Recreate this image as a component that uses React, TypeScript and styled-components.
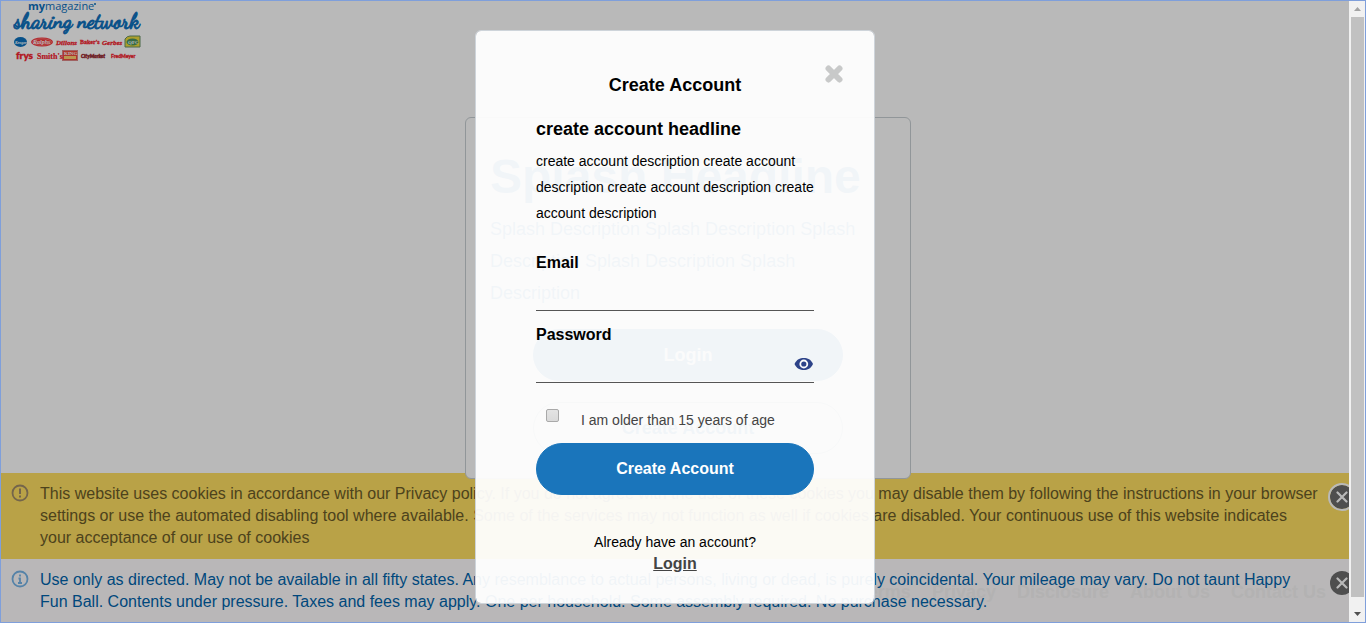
import React from "react";
import styled, { createGlobalStyle, css } from "styled-components";

const GlobalStyle = createGlobalStyle`
  *, *::before, *::after { box-sizing: border-box; }
  body { margin: 0; font-family: "Liberation Sans", Arial, sans-serif; color: #000; }
  h1, h2, h3, p { margin: 0; }
`;

const Frame = styled.div`
  display: flex;
  min-height: 100vh;
  border: 1px solid #7f9fdb;
`;

const Page = styled.div`
  position: relative;
  flex: 1;
  min-width: 0;
  display: flex;
  flex-direction: column;
  overflow: hidden;
  background: #fff;
`;

const Header = styled.header`
  height: 116px;
  padding-left: 12px;
`;

const Main = styled.main`
  padding-left: 26px;
`;

const SplashCard = styled.section`
  position: relative;
  z-index: 1;
  width: 446px;
  margin: 0 auto -6px;
  padding: 30px 24px 24px;
  display: flex;
  flex-direction: column;
  border: 1px solid #c8cfd3;
  border-radius: 6px;
  background: #fff;
  color: #1a75bb;
`;

const SplashTitle = styled.h1`
  font-size: 48px;
  line-height: 58px;
  white-space: nowrap;
`;

const SplashText = styled.p`
  margin-top: 7px;
  font-size: 18px;
  line-height: 32px;
`;

const PillButton = styled.button<{ $outline?: boolean; $size: number }>`
  height: 52px;
  padding: 0;
  border: 1px solid #1a75bb;
  border-radius: 26px;
  background: #1a75bb;
  color: #fff;
  font: bold ${(p) => p.$size}px "Liberation Sans", Arial, sans-serif;
  cursor: pointer;
  ${(p) =>
    p.$outline &&
    css`
      border-color: #a4b8c6;
      background: transparent;
      color: #1a75bb;
    `}
`;

const SplashActions = styled.div`
  display: flex;
  flex-direction: column;
  gap: 21px;
  margin: 20px 43px 0;
`;

const Notices = styled.div`
  position: relative;
  margin-top: auto;
`;

const Notice = styled.div<{ $warning?: boolean }>`
  position: relative;
  display: flex;
  align-items: flex-start;
  padding: 10px 29px ${(p) => (p.$warning ? 10 : 9)}px 10px;
  background: ${(p) => (p.$warning ? "#ffdf62" : "#fffdfe")};
  color: ${(p) => (p.$warning ? "#6b5c28" : "#0064ac")};
`;

const NoticeIcon = styled.svg`
  flex: none;
  width: 18px;
  height: 18px;
  margin: 1px 11px 0 0;
`;

const NoticeText = styled.p`
  position: relative;
  z-index: 1;
  font-size: 16px;
  line-height: 22px;
`;

const NoticeClose = styled.button<{ $ring?: boolean }>`
  position: absolute;
  z-index: 1;
  top: 10px;
  right: -7px;
  width: 28px;
  height: 28px;
  padding: 0;
  display: grid;
  place-items: center;
  border: 2px solid ${(p) => (p.$ring ? "#fff" : "transparent")};
  border-radius: 50%;
  background: #6c6c6c;
  background-clip: padding-box;
  color: #fff;
  cursor: pointer;
`;

const FooterNav = styled.nav`
  position: absolute;
  right: 23px;
  bottom: 20px;
  display: flex;
  gap: 21px;
`;

const FooterLink = styled.a`
  color: #f7f5f6;
  font-size: 18px;
  line-height: 20px;
  font-weight: bold;
  text-decoration: none;
`;

const Backdrop = styled.div`
  position: absolute;
  inset: 0;
  z-index: 2;
  display: flex;
  align-items: flex-start;
  justify-content: center;
  padding-top: 29px;
  background: rgba(0, 0, 0, 0.275);
`;

const Dialog = styled.form`
  position: relative;
  width: 400px;
  padding: 42px 60px 28px;
  display: flex;
  flex-direction: column;
  border: 1px solid #ced4da;
  border-radius: 6px;
  background: rgba(255, 255, 255, 0.94);
  background-clip: padding-box;
`;

const DialogClose = styled.button`
  position: absolute;
  top: 34px;
  right: 31px;
  width: 18px;
  height: 18px;
  padding: 0;
  border: 0;
  background: none;
  color: #c8c9c9;
  cursor: pointer;
  svg { display: block; }
`;

const DialogTitle = styled.h2`
  font-size: 18px;
  line-height: 24px;
  text-align: center;
`;

const DialogHeadline = styled.h3`
  margin-top: 20px;
  font-size: 18px;
  line-height: 24px;
`;

const DialogText = styled.p`
  margin-top: 7px;
  font-size: 14px;
  line-height: 26px;
`;

const Fields = styled.div`
  display: flex;
  flex-direction: column;
  gap: 12px;
  margin-top: 25px;
`;

const Field = styled.div`
  display: flex;
  flex-direction: column;
`;

const Label = styled.label`
  font-size: 16px;
  font-weight: bold;
  line-height: 24px;
`;

const InputRow = styled.div`
  display: flex;
  align-items: center;
  height: 36px;
  padding-bottom: 2px;
  border-bottom: 1px solid #555;
`;

const Input = styled.input`
  flex: 1;
  min-width: 0;
  height: 32px;
  padding: 0;
  border: 0;
  outline: 0;
  background: transparent;
  font: 16px "Liberation Sans", Arial, sans-serif;
`;

const EyeButton = styled.button`
  padding: 0;
  border: 0;
  background: none;
  line-height: 0;
  cursor: pointer;
`;

const AgeRow = styled.label`
  display: flex;
  align-items: flex-start;
  gap: 22px;
  margin: 26px 0 12px;
  padding-left: 10px;
  color: #444;
  font-size: 14px;
  line-height: 22px;
`;

const Checkbox = styled.input`
  appearance: none;
  width: 13px;
  height: 13px;
  margin: 0;
  border: 1px solid #a9a9a9;
  border-radius: 2px;
  background: linear-gradient(#e4e4e4, #dadada);
`;

const SignIn = styled.div`
  display: flex;
  flex-direction: column;
  align-items: center;
  margin-top: 36px;
  font-size: 14px;
  line-height: 22px;
`;

const SignInLink = styled.a`
  color: #444;
  font-size: 16px;
  font-weight: bold;
`;

const ScrollTrack = styled.div`
  flex: none;
  width: 16px;
  display: flex;
  flex-direction: column;
  padding: 0 1px 0 2px;
  background: #f1f1f1;
`;

const ScrollArrow = styled.svg`
  flex: none;
  width: 13px;
  height: 16px;
`;

const ScrollThumb = styled.div`
  flex: 1;
  margin-bottom: 9px;
  background: #c1c1c1;
`;

const Logo = () => (
  <svg width="130" height="62" viewBox="0 0 130 62" role="img" aria-label="my magazine sharing network">
    <g fill="#0c70bd" fontFamily="'Open Sans', 'Noto Sans', sans-serif">
      <text x="15" y="9" fontSize="11"><tspan fontWeight="700">my</tspan>magazine</text>
      <circle cx="82" cy="3" r="1" />
    </g>
    <text x="1" y="27" fontFamily="'Dancing Script', cursive" fontSize="21" fontWeight="700" fill="#0c70bd" stroke="#0c70bd" strokeWidth="0.800">sharing network</text>
    <ellipse cx="7.500" cy="41" rx="6.500" ry="5" fill="#0c70bd" />
    <ellipse cx="29" cy="41" rx="11" ry="4.500" fill="#f5333c" />
    <ellipse cx="29" cy="41" rx="9.500" ry="3.200" fill="none" stroke="#ffb0a0" strokeWidth="0.500" />
    <path d="M112 46V38q2-3 5-3h10v11z" fill="#eddc3c" stroke="#679064" />
    <ellipse cx="119.500" cy="41" rx="6" ry="3.500" fill="#4b9360" />
    <rect x="49.500" y="49.500" width="15" height="10" fill="#f24a3c" stroke="#d88" />
    <path d="M51 55h12v3H51z" fill="#ffd070" />
    <g fontFamily="'Liberation Serif', serif" fontWeight="700" fill="#f5222e">
      <text x="2" y="43" fontSize="4" fontStyle="italic" fill="#fff">Kroger</text>
      <text x="20" y="43" fontSize="6" fontStyle="italic" fill="#fff">Ralphs</text>
      <text x="43" y="44" fontSize="7" fontStyle="italic" stroke="#f5222e" strokeWidth="0.300">Dillons</text>
      <text x="67" y="43" fontSize="6" stroke="#f5222e" strokeWidth="0.300">Baker's</text>
      <text x="89" y="44" fontSize="7" fontStyle="italic" stroke="#f5222e" strokeWidth="0.300">Gerbes</text>
      <text x="115" y="43" fontSize="5" fill="#fff">QFC</text>
      <text x="3" y="58" fontSize="10" fontFamily="Lato, sans-serif" fontWeight="900" stroke="#f5222e" strokeWidth="0.400">frys</text>
      <text x="24" y="58" fontSize="8" stroke="#f5222e" strokeWidth="0.200">Smith's</text>
      <text x="51" y="54" fontSize="5" fill="#fff">KING</text>
      <text x="68" y="57" fontSize="5" fontStyle="italic" fontFamily="Lato, sans-serif" fontWeight="900" stroke="#8d3038" strokeWidth="0.500">CityMarket</text>
      <text x="98" y="57" fontSize="5" fontFamily="Lato, sans-serif" fontWeight="900" stroke="#f5222e" strokeWidth="0.300">FredMeyer</text>
    </g>
  </svg>
);

const CrossIcon = () => (
  <svg width="12" height="12" viewBox="0 0 12 12" aria-hidden="true">
    <path d="M1.500 1.500l9 9M10.500 1.500l-9 9" stroke="currentColor" strokeWidth="2.200" strokeLinecap="round" />
  </svg>
);

const footerLinks = ["Terms", "Privacy", "Disclosure", "About Us", "Contact Us"];

export default function App() {
  return (
    <>
      <GlobalStyle />
      <Frame>
        <Page>
          <Header>
            <Logo />
          </Header>
          <Main>
            <SplashCard>
              <SplashTitle>Splash Headline</SplashTitle>
              <SplashText>
                Splash Description Splash Description Splash Description Splash Description Splash Description
              </SplashText>
              <SplashActions>
                <PillButton type="button" $size={18}>Login</PillButton>
                <PillButton type="button" $size={18} $outline>Create Account</PillButton>
              </SplashActions>
            </SplashCard>
          </Main>
          <Notices>
            <Notice $warning>
              <NoticeIcon viewBox="0 0 18 18" aria-hidden="true">
                <circle cx="9" cy="9" r="7.500" fill="none" stroke="#a08c68" strokeWidth="1.800" />
                <path d="M9 4.500v5.500M9 11.500v2" stroke="#a08c68" strokeWidth="2" />
              </NoticeIcon>
              <NoticeText>
                This website uses cookies in accordance with our Privacy policy. If you do not agree with the use of
                these cookies you may disable them by following the instructions in your browser settings or use the
                automated disabling tool where available. Some of the services may not function as well if cookies are
                disabled. Your continuous use of this website indicates your acceptance of our use of cookies
              </NoticeText>
              <NoticeClose type="button" aria-label="Dismiss cookie notice" $ring>
                <CrossIcon />
              </NoticeClose>
            </Notice>
            <Notice>
              <NoticeIcon viewBox="0 0 18 18" aria-hidden="true">
                <circle cx="9" cy="9" r="7.500" fill="none" stroke="#77b5e8" strokeWidth="1.800" />
                <path d="M9 4.500v2M7.500 8.500h1.500v4M7 13h4" fill="none" stroke="#77b5e8" strokeWidth="1.800" />
              </NoticeIcon>
              <NoticeText>
                Use only as directed. May not be available in all fifty states. Any resemblance to actual persons,
                living or dead, is purely coincidental. Your mileage may vary. Do not taunt Happy Fun Ball. Contents
                under pressure. Taxes and fees may apply. One per household. Some assembly required. No purchase
                necessary.
              </NoticeText>
              <FooterNav>
                {footerLinks.map((name) => (
                  <FooterLink key={name} href="#">{name}</FooterLink>
                ))}
              </FooterNav>
              <NoticeClose type="button" aria-label="Dismiss notice">
                <CrossIcon />
              </NoticeClose>
            </Notice>
          </Notices>
          <Backdrop>
            <Dialog role="dialog" aria-labelledby="dialog-title" onSubmit={(e) => e.preventDefault()}>
              <DialogClose type="button" aria-label="Close">
                <svg width="18" height="18" viewBox="0 0 18 18" aria-hidden="true">
                  <path d="M3.500 3.500l11 11M14.500 3.500l-11 11" stroke="currentColor" strokeWidth="6" strokeLinecap="round" />
                </svg>
              </DialogClose>
              <DialogTitle id="dialog-title">Create Account</DialogTitle>
              <DialogHeadline>create account headline</DialogHeadline>
              <DialogText>
                create account description create account description create account description create account
                description
              </DialogText>
              <Fields>
                <Field>
                  <Label htmlFor="email">Email</Label>
                  <InputRow>
                    <Input id="email" type="email" />
                  </InputRow>
                </Field>
                <Field>
                  <Label htmlFor="password">Password</Label>
                  <InputRow>
                    <Input id="password" type="password" />
                    <EyeButton type="button" aria-label="Show password">
                      <svg width="20" height="14" viewBox="0 0 20 14" aria-hidden="true">
                        <path d="M0.500 7C2.500 2.500 6 1 9.800 1s7.300 1.500 9.200 6c-2 4.500-5.500 6-9.200 6S2.500 11.500 0.500 7z" fill="#2d4389" />
                        <circle cx="9.800" cy="7" r="4.400" fill="#fbfbfb" />
                        <circle cx="9.800" cy="7" r="2.600" fill="#2d4389" />
                      </svg>
                    </EyeButton>
                  </InputRow>
                </Field>
              </Fields>
              <AgeRow>
                <Checkbox type="checkbox" />
                I am older than 15 years of age
              </AgeRow>
              <PillButton type="submit" $size={16}>Create Account</PillButton>
              <SignIn>
                <span>Already have an account?</span>
                <SignInLink href="#">Login</SignInLink>
              </SignIn>
            </Dialog>
          </Backdrop>
        </Page>
        <ScrollTrack aria-hidden="true">
          <ScrollArrow viewBox="0 0 13 16">
            <path d="M3 10l3.500-4L10 10z" fill="#a3a3a3" />
          </ScrollArrow>
          <ScrollThumb />
          <ScrollArrow viewBox="0 0 13 16">
            <path d="M3 6l3.500 4L10 6z" fill="#505050" />
          </ScrollArrow>
        </ScrollTrack>
      </Frame>
    </>
  );
}
